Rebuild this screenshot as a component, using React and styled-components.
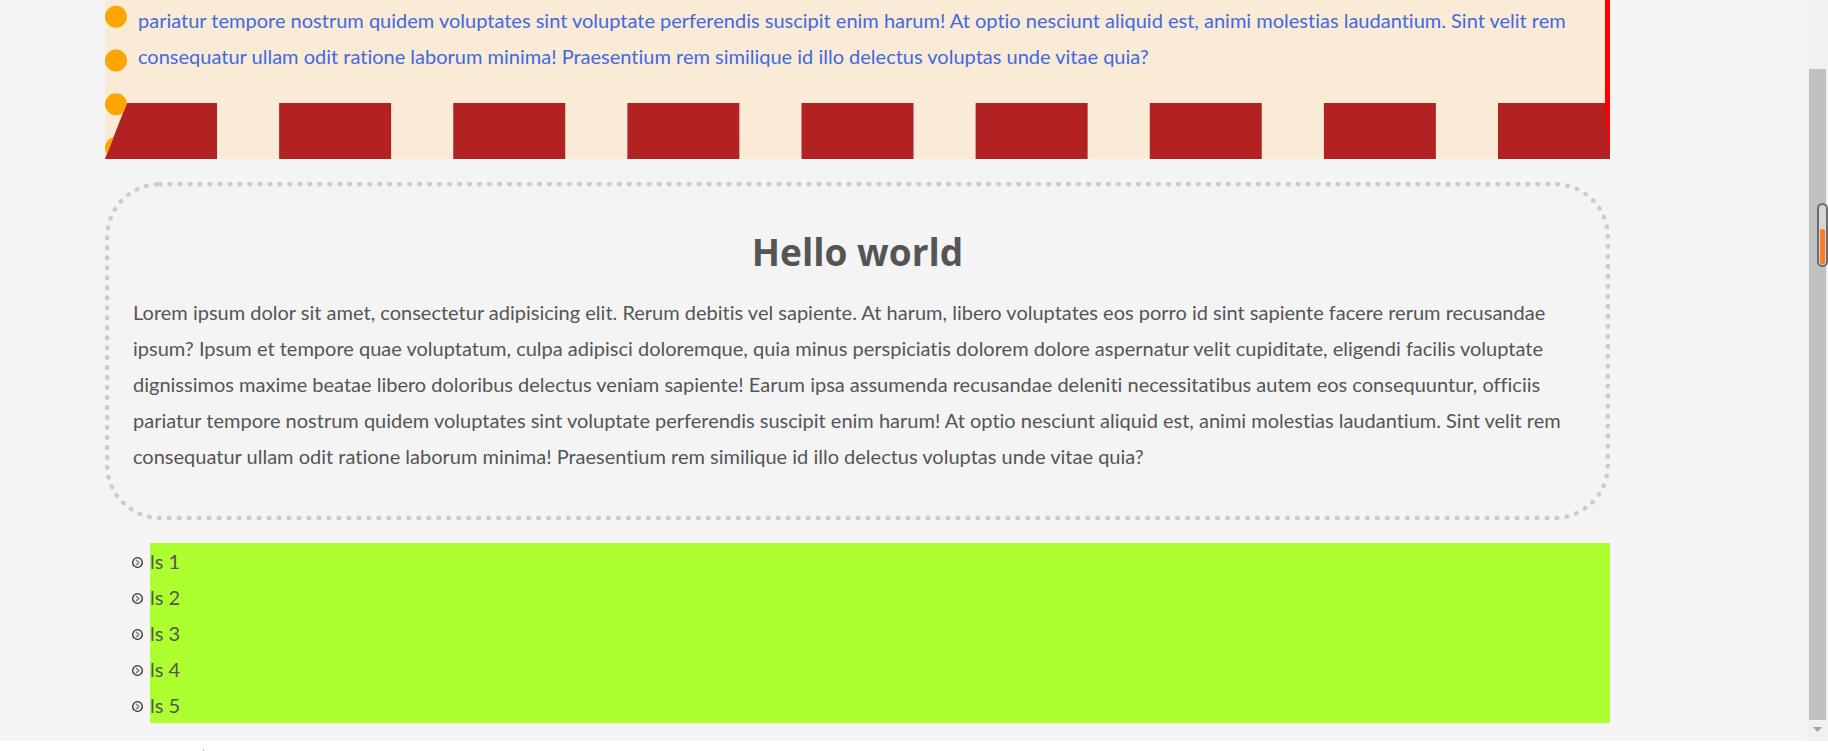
import React from "react";
import styled, { createGlobalStyle } from "styled-components";

const bullet = encodeURIComponent(
  `<svg xmlns="http://www.w3.org/2000/svg" width="11" height="12" viewBox="0 0 11 12" fill="none"><circle cx="5.5" cy="5.5" r="4.8" stroke="#2c2c2c" stroke-width="1.3"/><path d="M4 2.8 6.8 5.5 4 8.2" stroke="#8a8488" stroke-width="1.6"/></svg>`
);

const GlobalStyle = createGlobalStyle`
  *, *::before, *::after { box-sizing: border-box; }
  body {
    margin: 0;
    background: #fff;
    color: #555;
    font-family: Lato, "Open Sans", sans-serif;
    font-size: 20px;
    line-height: 36px;
    font-variant-ligatures: none;
  }
  h1, p, ul { margin: 0; }
`;

const Page = styled.div`
  display: flex;
  flex-direction: column;
  min-height: 100vh;
  overflow: hidden;
`;

const Body = styled.div`
  flex: 1;
  display: flex;
  background: #f4f4f4;
`;

const Main = styled.main`
  flex: 1;
  min-width: 0;
  padding: 0 197px 17px 105px;
`;

const Paragraph = styled.p`
  white-space: nowrap;
`;

const StripedCard = styled.section`
  margin-top: -38px;
  padding: 40px 10px 29px 11px;
  border-style: none solid dashed dotted;
  border-width: 0 5px 56px 22px;
  border-color: transparent red firebrick orange;
  background: antiquewhite;
  color: royalblue;
`;

const DottedCard = styled.section`
  margin: 23px 0;
  padding: 39px 23px 41px;
  border: 5px dotted #ccc;
  border-radius: 55px;
`;

const Title = styled.h1`
  margin-bottom: 16px;
  font-family: "Open Sans", sans-serif;
  font-size: 37px;
  line-height: 52px;
  text-align: center;
`;

const List = styled.ul`
  padding-left: 45px;
  list-style-image: url("data:image/svg+xml,${bullet}");
`;

const Item = styled.li`
  background: greenyellow;
`;

const ScrollTrack = styled.aside`
  position: relative;
  flex: none;
  width: 21px;
  display: flex;
  flex-direction: column;
  align-items: center;
  padding-top: 69px;
  background: #f1f1f1;
`;

const ScrollThumb = styled.div`
  flex: 1;
  width: 17px;
  background: #c1c1c1;
`;

const ScrollArrow = styled.svg`
  display: block;
  width: 17px;
  height: 21px;
`;

const Gauge = styled.div`
  position: absolute;
  top: 203px;
  right: 0;
  width: 11px;
  height: 64px;
  padding: 24px 1px 1px;
  border: 2px solid #6b6b6b;
  border-radius: 6px;
  background: #d6d6d6;
`;

const GaugeLevel = styled.div`
  height: 100%;
  border-radius: 2px;
  background: #ff7a26;
`;

const Strip = styled.footer`
  flex: none;
  display: flex;
  align-items: flex-end;
  height: 10px;
  padding: 0 203px;
`;

const Tick = styled.span`
  width: 1px;
  height: 2px;
  background: #bbb;
`;

const items = [1, 2, 3, 4, 5];

const closing = (
  <>
    pariatur tempore nostrum quidem voluptates sint voluptate perferendis suscipit enim harum! At optio nesciunt
    aliquid est, animi molestias laudantium. Sint velit rem
    <br />
    consequatur ullam odit ratione laborum minima! Praesentium rem similique id illo delectus voluptas unde vitae quia?
  </>
);

export default function App() {
  return (
    <Page>
      <GlobalStyle />
      <Body>
        <Main>
          <StripedCard>
            <Paragraph>{closing}</Paragraph>
          </StripedCard>
          <DottedCard>
            <Title>Hello world</Title>
            <Paragraph>
              Lorem ipsum dolor sit amet, consectetur adipisicing elit. Rerum debitis vel sapiente. At harum, libero
              voluptates eos porro id sint sapiente facere rerum recusandae
              <br />
              ipsum? Ipsum et tempore quae voluptatum, culpa adipisci doloremque, quia minus perspiciatis dolorem
              dolore aspernatur velit cupiditate, eligendi facilis voluptate
              <br />
              dignissimos maxime beatae libero doloribus delectus veniam sapiente! Earum ipsa assumenda recusandae
              deleniti necessitatibus autem eos consequuntur, officiis
              <br />
              {closing}
            </Paragraph>
          </DottedCard>
          <List>
            {items.map((n) => (
              <Item key={n}>ls {n}</Item>
            ))}
          </List>
        </Main>
        <ScrollTrack>
          <ScrollThumb />
          <ScrollArrow viewBox="0 0 17 21" aria-hidden="true">
            <path d="M4 7h9l-4.5 5z" fill="#a3a3a3" />
          </ScrollArrow>
          <Gauge>
            <GaugeLevel />
          </Gauge>
        </ScrollTrack>
      </Body>
      <Strip>
        <Tick />
      </Strip>
    </Page>
  );
}
